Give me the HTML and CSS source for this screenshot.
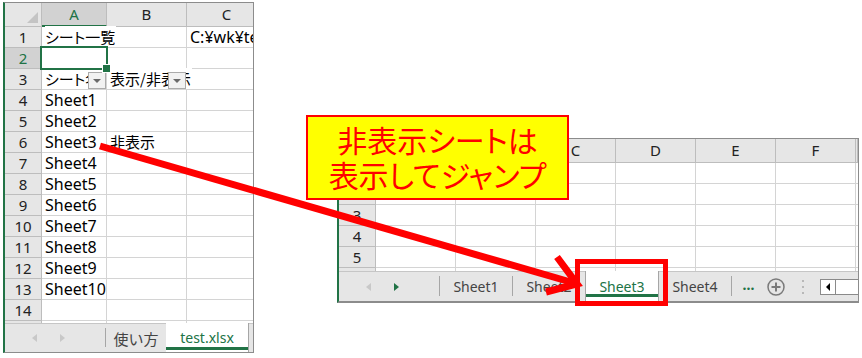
FILE: index.html
```html
<!DOCTYPE html>
<html lang="ja">

<head>
    <meta charset="UTF-8">
    <meta name="viewport" content="width=device-width, initial-scale=1.0">
    <title>非表示シートは表示してジャンプ</title>
    <link rel="stylesheet" href="styles.css">
</head>

<body>
    <!-- 左：シート一覧のブック -->
    <div class="win win-left">
        <div class="sheet">
            <div class="c corner"><i></i></div>
            <div class="c ch on">A</div>
            <div class="c ch">B</div>
            <div class="c ch">C</div>

            <div class="c rh">1</div>
            <div class="c"><span class="ja over">シート一覧</span></div>
            <div class="c"></div>
            <div class="c">C:¥wk¥test.xlsx</div>

            <div class="c rh on">2</div>
            <div class="c"><div class="sel"></div></div>
            <div class="c"></div>
            <div class="c"></div>

            <div class="c rh">3</div>
            <div class="c"><span class="ja over">シート名</span><b class="filter"></b></div>
            <div class="c"><span class="ja over">表示/非表示</span><b class="filter"></b></div>
            <div class="c"></div>

            <div class="c rh">4</div><div class="c">Sheet1</div><div class="c"></div><div class="c"></div>
            <div class="c rh">5</div><div class="c">Sheet2</div><div class="c"></div><div class="c"></div>
            <div class="c rh">6</div><div class="c">Sheet3</div><div class="c"><span class="ja">非表示</span></div><div class="c"></div>
            <div class="c rh">7</div><div class="c">Sheet4</div><div class="c"></div><div class="c"></div>
            <div class="c rh">8</div><div class="c">Sheet5</div><div class="c"></div><div class="c"></div>
            <div class="c rh">9</div><div class="c">Sheet6</div><div class="c"></div><div class="c"></div>
            <div class="c rh">10</div><div class="c">Sheet7</div><div class="c"></div><div class="c"></div>
            <div class="c rh">11</div><div class="c">Sheet8</div><div class="c"></div><div class="c"></div>
            <div class="c rh">12</div><div class="c">Sheet9</div><div class="c"></div><div class="c"></div>
            <div class="c rh">13</div><div class="c">Sheet10</div><div class="c"></div><div class="c"></div>
            <div class="c rh">14</div><div class="c"></div><div class="c"></div><div class="c"></div>
            <div class="c rh"></div><div class="c"></div><div class="c"></div><div class="c"></div>
        </div>
        <div class="tabs">
            <div class="nav"><i class="prev"></i><i class="next"></i></div>
            <div class="sep"></div>
            <div class="tab tab-ja">使い方</div>
            <div class="tab on tab-test">test.xlsx</div>
        </div>
    </div>

    <!-- 右：ジャンプ先のブック（左上は吹き出しの下に隠れる） -->
    <div class="win win-right">
        <div class="sheet">
            <div class="c corner"><i></i></div>
            <div class="c ch"></div><div class="c ch"></div><div class="c ch">C</div>
            <div class="c ch">D</div><div class="c ch">E</div><div class="c ch">F</div><div class="c ch"></div>

            <div class="c rh"></div><div class="c"></div><div class="c"></div><div class="c"></div><div class="c"></div><div class="c"></div><div class="c"></div><div class="c"></div>
            <div class="c rh"></div><div class="c"></div><div class="c"></div><div class="c"></div><div class="c"></div><div class="c"></div><div class="c"></div><div class="c"></div>
            <div class="c rh">3</div><div class="c"></div><div class="c"></div><div class="c"></div><div class="c"></div><div class="c"></div><div class="c"></div><div class="c"></div>
            <div class="c rh">4</div><div class="c"></div><div class="c"></div><div class="c"></div><div class="c"></div><div class="c"></div><div class="c"></div><div class="c"></div>
            <div class="c rh">5</div><div class="c"></div><div class="c"></div><div class="c"></div><div class="c"></div><div class="c"></div><div class="c"></div><div class="c"></div>
            <div class="c rh"></div><div class="c"></div><div class="c"></div><div class="c"></div><div class="c"></div><div class="c"></div><div class="c"></div><div class="c"></div>
        </div>
        <div class="tabs">
            <div class="nav"><i class="prev"></i><i class="next dark"></i></div>
            <div class="sep"></div>
            <div class="tab">Sheet1</div>
            <div class="sep"></div>
            <div class="tab">Sheet2</div>
            <div class="tab on">Sheet3</div>
            <div class="tab">Sheet4</div>
            <div class="sep"></div>
            <div class="more">...</div>
            <div class="add">
                <svg width="20" height="20" viewBox="0 0 20 20">
                    <circle cx="10" cy="10" r="8" fill="none" stroke="#7a7a7a" stroke-width="1.5"/>
                    <path d="M10 5.5v9M5.5 10h9" stroke="#7a7a7a" stroke-width="2"/>
                </svg>
            </div>
            <div class="grip">
                <svg width="4" height="14" viewBox="0 0 4 14">
                    <rect x="1" y="0" width="2" height="2" fill="#b8b8b8"/>
                    <rect x="1" y="6" width="2" height="2" fill="#b8b8b8"/>
                    <rect x="1" y="12" width="2" height="2" fill="#b8b8b8"/>
                </svg>
            </div>
            <div class="hscroll">
                <div class="sbtn"><i></i></div>
                <div class="track"></div>
            </div>
        </div>
    </div>

    <!-- 吹き出し -->
    <div class="callout">非表示シートは<br>表示してジャンプ</div>

    <!-- 矢印 -->
    <svg class="arrow" width="862" height="358" viewBox="0 0 862 358">
        <line x1="100" y1="146" x2="574" y2="283" stroke="#ff0000" stroke-width="7"/>
        <polyline points="557,257 577,284 546,292" fill="none" stroke="#ff0000" stroke-width="7" stroke-linejoin="miter"/>
    </svg>

    <!-- Sheet3 を囲む枠 -->
    <div class="mark"></div>
</body>

</html>
```

FILE: styles.css
```css
* {
    margin: 0;
    padding: 0;
    box-sizing: border-box;
}

body {
    width: 862px;
    height: 358px;
    position: relative;
    overflow: hidden;
    background-color: #fff;
    font-family: "Noto Sans", "Noto Sans CJK JP", sans-serif;
}

/* ウィンドウ（画面上の位置そのものが内容） */
.win {
    position: absolute;
    display: flex;
    flex-direction: column;
    background-color: #fff;
    border: 1px solid #8c8c8c;
    border-left: 2px solid #217346;
}

.win-left {
    left: 3px;
    top: 2px;
    width: 251px;
    height: 351px;
}

.win-right {
    left: 337px;
    top: 138px;
    width: 522px;
    height: 165px;
    border-bottom-width: 2px;
}

/* セル */
.sheet {
    display: grid;
    grid-template-rows: 24px;
    grid-auto-rows: 21px;
    align-content: start;
    overflow: hidden;
}

.win-left .sheet {
    height: 320px;
    grid-template-columns: 37px 65px 80px 80px;
}

.win-right .sheet {
    height: 132px;
    grid-template-columns: 37px repeat(6, 80px) 2px;
}

.c {
    position: relative;
    border-right: 1px solid #d4d4d4;
    border-bottom: 1px solid #d4d4d4;
    padding-left: 3px;
    font-size: 16px;
    line-height: 20px;
    white-space: nowrap;
    color: #000;
}

.ja {
    font-family: "Noto Sans CJK JP", sans-serif;
    font-size: 15px;
    font-feature-settings: "palt";
}

/* 隣のセルへはみ出す文字 */
.over {
    position: relative;
    z-index: 1;
    background-color: #fff;
    padding-right: 1px;
}

.ch,
.rh,
.corner {
    background-color: #e6e6e6;
    border-color: #bdbdbd;
    padding: 0;
    text-align: center;
    font-size: 15px;
    color: #222;
}

.ch {
    line-height: 23px;
}

.ch.on {
    background-color: #d2d2d2;
    color: #217346;
    border-bottom: 2px solid #217346;
}

.rh.on {
    background-color: #d2d2d2;
    color: #217346;
}

.corner {
    display: flex;
    justify-content: flex-end;
    align-items: flex-end;
    padding: 0 3px 3px 0;
}

.corner i {
    width: 0;
    height: 0;
    border-left: 11px solid transparent;
    border-bottom: 11px solid #c4c4c4;
}

/* 選択中のセル */
.sel {
    position: absolute;
    left: -2px;
    top: -2px;
    width: 68px;
    height: 24px;
    border: 2px solid #217346;
    z-index: 3;
}

.sel::after {
    content: "";
    position: absolute;
    right: -5px;
    bottom: -5px;
    width: 7px;
    height: 7px;
    background-color: #217346;
    border: 1px solid #fff;
}

/* フィルターボタン */
.filter {
    position: absolute;
    right: 0;
    top: 3px;
    width: 18px;
    height: 17px;
    z-index: 2;
    background-color: #f2f2f2;
    border: 1px solid #ababab;
    display: flex;
    justify-content: center;
    align-items: center;
}

.filter::before {
    content: "";
    border-left: 4px solid transparent;
    border-right: 4px solid transparent;
    border-top: 4px solid #6a6a6a;
}

/* シート見出し */
.tabs {
    flex: 1;
    display: flex;
    background-color: #e6e6e6;
    border-top: 1px solid #c6c6c6;
    font-size: 14px;
    color: #444;
}

.nav {
    width: 100px;
    display: flex;
    align-items: center;
}

.nav i {
    width: 0;
    height: 0;
    border-top: 4px solid transparent;
    border-bottom: 4px solid transparent;
}

.nav .prev {
    margin-left: 27px;
    border-right: 5px solid #c8c8c8;
}

.nav .next {
    margin-left: 23px;
    border-left: 5px solid #c8c8c8;
}

.nav .next.dark {
    border-left-color: #217346;
}

.sep {
    width: 1px;
    margin: 4px 0 5px;
    background-color: #a6a6a6;
}

.tab {
    width: 72px;
    display: flex;
    justify-content: center;
    align-items: center;
}

.tab-ja {
    width: 60px;
    font-family: "Noto Sans CJK JP", sans-serif;
    font-size: 15px;
}

.tab.on {
    margin-top: -1px;
    background-color: #fff;
    color: #217346;
    border-left: 1px solid #a6a6a6;
    border-right: 1px solid #a6a6a6;
    box-shadow: inset 0 -4px 0 #fff, inset 0 -7px 0 #217346;
}

.win-right .tab.on {
    width: 74px;
}

.tab-test {
    width: 83px;
    border-left: none !important;
    box-shadow: inset 0 -2px 0 #fff, inset 0 -5px 0 #217346 !important;
}

.more {
    width: 33px;
    display: flex;
    justify-content: center;
    align-items: center;
    color: #217346;
    font-weight: bold;
    padding-bottom: 4px;
}

.add {
    width: 21px;
    display: flex;
    justify-content: center;
    align-items: center;
}

.grip {
    width: 34px;
    display: flex;
    justify-content: center;
    align-items: center;
}

.hscroll {
    width: 38px;
    height: 16px;
    align-self: center;
    display: flex;
    background-color: #fff;
    border: 1px solid #8a8a8a;
    border-right: none;
}

.sbtn {
    width: 15px;
    border-right: 1px solid #8a8a8a;
    display: flex;
    justify-content: center;
    align-items: center;
}

.sbtn i {
    border-top: 4px solid transparent;
    border-bottom: 4px solid transparent;
    border-right: 4px solid #000;
}

.track {
    flex: 1;
}

/* 吹き出し */
.callout {
    position: absolute;
    left: 306px;
    top: 115px;
    width: 263px;
    height: 85px;
    z-index: 5;
    background-color: #ffff00;
    border: 2px solid #ff0000;
    color: #ff0000;
    font-family: "Noto Sans CJK JP", sans-serif;
    font-feature-settings: "palt";
    font-size: 30px;
    line-height: 35px;
    text-align: center;
    padding-top: 5px;
}

.arrow {
    position: absolute;
    left: 0;
    top: 0;
    z-index: 6;
}

.mark {
    position: absolute;
    left: 575px;
    top: 259px;
    width: 93px;
    height: 47px;
    z-index: 7;
    border: 5px solid #ff0000;
}
```
